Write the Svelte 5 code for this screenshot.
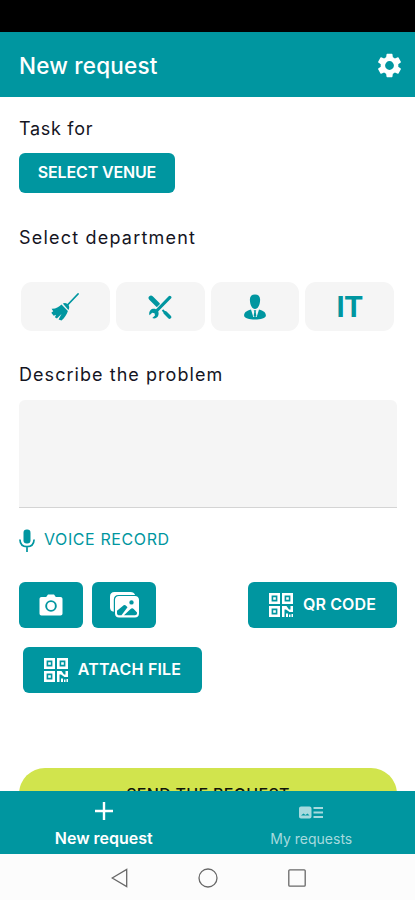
<script lang="ts">
  const departments = ['cleaning', 'maintenance', 'reception', 'it']

  let department = $state('')
  let problem = $state('')
</script>

{#snippet qrIcon()}
  <svg viewBox="0 0 24 24" width="24" height="24" aria-hidden="true">
    <path
      d="M1.3 1.300h8.400v8.400H1.300zM14.300 1.300h8.400v8.400h-8.400zM1.300 14.300h8.400v8.400H1.300z"
      fill="none"
      stroke="currentColor"
      stroke-width="2.600"
    />
    <path
      fill="currentColor"
      d="M4.2 4.200h2.600v2.600H4.200zM17.200 4.200h2.600v2.600h-2.600zM4.200 17.200h2.600v2.600H4.200zM13 13h4.500l2.500 3.500h1.500V13H24v6h-3.500L17 16.500h-1.500V24H13zM17 20.500h2v3.500h-2zM20 21.500h1.500V24H20zM22.500 21H24v3h-1.500z"
    />
  </svg>
{/snippet}

<div class="screen">
  <div class="status-bar"></div>

  <header class="app-bar">
    <h1>New request</h1>
    <button class="plain" aria-label="Settings">
      <svg viewBox="1.8 1.8 20.4 20.4" width="25" height="25">
        <path
          fill="currentColor"
          d="M19.14 12.94c.04-.3.06-.61.06-.94 0-.32-.02-.64-.07-.94l2.03-1.58a.49.49 0 0 0 .12-.61l-1.92-3.32a.49.49 0 0 0-.59-.22l-2.39.96a7.03 7.03 0 0 0-1.62-.94l-.36-2.54a.48.48 0 0 0-.48-.41h-3.84a.47.47 0 0 0-.47.41l-.36 2.54c-.59.24-1.13.57-1.62.94l-2.39-.96a.48.48 0 0 0-.59.22L2.74 8.87a.47.47 0 0 0 .12.61l2.03 1.58c-.05.3-.09.63-.09.94s.02.64.07.94l-2.03 1.58a.49.49 0 0 0-.12.61l1.92 3.32c.12.22.37.29.59.22l2.39-.96c.5.38 1.03.7 1.62.94l.36 2.54c.05.24.24.41.48.41h3.84c.24 0 .44-.17.47-.41l.36-2.54c.59-.24 1.13-.56 1.62-.94l2.39.96c.22.08.47 0 .59-.22l1.92-3.32a.47.47 0 0 0-.12-.61zM12 15.6a3.6 3.6 0 1 1 0-7.2 3.6 3.6 0 0 1 0 7.2z"
        />
      </svg>
    </button>
  </header>

  <main>
    <h2 class="task-label">Task for</h2>
    <button class="btn venue"><span>SELECT VENUE</span></button>

    <h2 class="department-label">Select department</h2>
    <div class="departments">
      {#each departments as name (name)}
        <button class="tile" aria-label={name} aria-pressed={department === name} onclick={() => (department = name)}>
          {#if name === 'cleaning'}
            <svg viewBox="0 0 28 28" width="28" height="28">
              <path d="M27 1 17 11.5" stroke="currentColor" stroke-width="1.8" stroke-linecap="round" />
              <path
                fill="currentColor"
                d="M11.8 10.6c2.2-1.2 4.9-.2 6 1.800.7 1.500.5 3.200-.4 4.600zM10.500 11.600l6.400 6.400c-1 3.300-3.400 6.900-6.400 9.600L7.600 26.400l2.900-5.400-4.600 4.500-2-1.300 1.200-2.500-2.400 1L.3 19.700l1.900-1.500-1.600-2.400c4.500.2 6.700-1.400 9.900-4.200z"
              />
            </svg>
          {:else if name === 'maintenance'}
            <svg viewBox="0 0 24 24" width="24" height="24">
              <path d="M3 3 9.5 9.5" stroke="currentColor" stroke-width="4.8" stroke-linecap="round" />
              <path d="M14.5 15 17 17.5" stroke="currentColor" stroke-width="2" />
              <path d="M17.3 17.8 21.5 22" stroke="currentColor" stroke-width="3.6" stroke-linecap="round" />
              <path d="M8 16.5 20.5 4" stroke="#f5f5f5" stroke-width="5" />
              <path d="M8 16.5 21.8 2.4" stroke="currentColor" stroke-width="3.2" stroke-linecap="round" />
              <path
                fill="currentColor"
                d="M2.4 15.2c1.8-1.9 5.4-1.8 7.2.2 1.7 2 1.2 5.7-.9 7.2-1.4 1-3.1 1.1-4.4.5L7 20.4l-.5-2.2-2.3-.4-2.7 2.500c-.6-1.700-.4-3.500.9-5.100z"
              />
            </svg>
          {:else if name === 'reception'}
            <svg viewBox="0 0 22 26" width="22" height="26">
              <path
                fill="currentColor"
                d="M11 .5c3.500 0 5.300 2.200 5.100 5.500-.1 4.700-2.100 9-5.100 9S6 10.700 5.900 6C5.700 2.700 7.500.5 11 .5z"
              />
              <path
                fill="currentColor"
                d="M7 15.600 9.300 23h3.400L15 15.600c4.500 1.200 6.900 3 6.900 6 0 2.600-5.400 4-10.900 4S.1 24.200.1 21.600c0-3 2.400-4.800 6.900-6z"
              />
              <path fill="currentColor" d="M9.700 16.200h2.600l-.6 1.600.6 4L11 23.500l-1.300-1.700.6-4z" />
            </svg>
          {:else}
            <span class="it">IT</span>
          {/if}
        </button>
      {/each}
    </div>

    <h2 class="problem-label">Describe the problem</h2>
    <textarea aria-label="Describe the problem" bind:value={problem}></textarea>

    <button class="plain voice">
      <svg viewBox="0 0 16 23" width="16" height="23" aria-hidden="true">
        <rect x="4.5" y="0.5" width="7" height="14" rx="3.2" fill="currentColor" />
        <path
          d="M.9 10.5c.2 4.500 3 7.200 7.100 7.200s6.900-2.700 7.100-7.200M8 17.700V23"
          fill="none"
          stroke="currentColor"
          stroke-width="1.7"
        />
      </svg>
      <span>VOICE RECORD</span>
    </button>

    <div class="attachments">
      <button class="btn square" aria-label="Camera">
        <svg viewBox="0 0 24 22" width="24" height="22">
          <path
            fill="currentColor"
            fill-rule="evenodd"
            d="M2.5 3h4.700L9 .5h6L16.800 3h4.700c1.200 0 2 .8 2 2v14.500c0 1.200-.8 2-2 2h-19c-1.200 0-2-.8-2-2V5c0-1.200.8-2 2-2zM12 6.200a5.800 5.800 0 1 0 0 11.600 5.800 5.800 0 0 0 0-11.600zm0 1.900a3.900 3.900 0 1 1 0 7.800 3.900 3.900 0 0 1 0-7.800z"
          />
        </svg>
      </button>
      <button class="btn square" aria-label="Gallery">
        <svg viewBox="0 0 29 26" width="29" height="26">
          <path
            fill="currentColor"
            d="M4.500 0h16c2.300 0 4 1.100 4.600 3H8.500C5.500 3 3.800 4.800 3.800 7.500v12.300C1.300 19.600 0 17.800 0 15.500v-11C0 1.700 1.700 0 4.500 0z"
          />
          <path
            fill="currentColor"
            fill-rule="evenodd"
            d="M9 4h16c2.400 0 4 1.500 4 3.800v13.700c0 2.400-1.600 4-4 4H9c-2.400 0-4-1.600-4-4V7.800C5 5.500 6.600 4 9 4zM7 18.700v2.600c0 1 .5 1.600 1.300 1.900h3.200l6-8-1.200-1.300c-1.200-1.100-2.400-1.100-3.500 0zM14 23.200h11c1.200 0 2-.8 2-2v-.8l-3.300-3.500c-1-.9-2.100-.9-3.100 0zM21.500 8.200a2.200 2.200 0 1 0 0 4.400 2.200 2.200 0 0 0 0-4.400z"
          />
        </svg>
      </button>
      <button class="btn qr">
        {@render qrIcon()}
        <span>QR CODE</span>
      </button>
      <button class="btn attach">
        {@render qrIcon()}
        <span>ATTACH FILE</span>
      </button>
    </div>

    <button class="send"><span>SEND THE REQUEST</span></button>
  </main>

  <nav class="tabs">
    <button class="tab active">
      <svg viewBox="0 0 18 18" width="18" height="18" aria-hidden="true">
        <path d="M9 0v18M0 9h18" stroke="currentColor" stroke-width="2.4" />
      </svg>
      <span>New request</span>
    </button>
    <button class="tab">
      <svg viewBox="0 0 24 13" width="24" height="13" aria-hidden="true">
        <path
          fill="currentColor"
          fill-rule="evenodd"
          d="M2 .5h8.500c1.100 0 2 .9 2 2v8c0 1.100-.9 2-2 2H2c-1.100 0-2-.9-2-2v-8c0-1.100.9-2 2-2zM2 9.500h8.500L8.500 7.500 6.500 9 4.500 7.500z"
        />
        <path d="M14.5 2H24M14.500 6.500H24M14.500 11H24" stroke="currentColor" stroke-width="2.2" />
      </svg>
      <span>My requests</span>
    </button>
  </nav>

  <div class="system-bar">
    <svg viewBox="0 0 17 20" width="17" height="20" aria-hidden="true">
      <path d="M15.7 1.500v17L1.200 10z" />
    </svg>
    <svg viewBox="0 0 20 20" width="20" height="20" aria-hidden="true">
      <circle cx="10" cy="10" r="9" />
    </svg>
    <svg viewBox="0 0 18 18" width="18" height="18" aria-hidden="true">
      <rect x="0.8" y="0.8" width="16.4" height="16.4" rx="1" />
    </svg>
  </div>
</div>

<style>
  :global(body) {
    margin: 0;
  }

  .screen {
    --teal: #0096a0;
    --tile: #f5f5f5;
    display: flex;
    flex-direction: column;
    width: 415px;
    height: 900px;
    overflow: hidden;
    background: #fff;
    color: #15151f;
    font-family: Inter, sans-serif;
  }

  button {
    display: flex;
    align-items: center;
    box-sizing: border-box;
    padding: 0;
    border: none;
    font: inherit;
    white-space: nowrap;
    cursor: pointer;
  }

  svg {
    display: block;
    flex: none;
  }

  .status-bar {
    flex: none;
    height: 32px;
    background: #000;
  }

  .app-bar {
    display: flex;
    flex: none;
    justify-content: space-between;
    align-items: center;
    box-sizing: border-box;
    height: 65px;
    padding: 1px 13px 0 19px;
    background: var(--teal);
    color: #fff;
  }

  h1 {
    margin: 0;
    font-size: 22.5px;
    font-weight: 500;
    letter-spacing: 0.2px;
  }

  h2 {
    margin: 0;
    font-size: 18px;
    font-weight: 400;
    line-height: 24px;
    white-space: nowrap;
  }

  .plain {
    background: none;
    color: inherit;
  }

  main {
    display: flex;
    flex: 1;
    flex-direction: column;
    min-height: 0;
    padding: 20px 18px 0 19px;
    overflow: hidden;
  }

  .btn {
    justify-content: center;
    border-radius: 6px;
    background: var(--teal);
    color: #fff;
    font-weight: 600;
  }

  .task-label {
    letter-spacing: 0.7px;
  }

  .venue {
    flex: none;
    width: 156px;
    height: 40px;
    margin-top: 12px;
    font-size: 16px;
    letter-spacing: -0.15px;
  }

  .department-label {
    margin-top: 33px;
    letter-spacing: 1.2px;
  }

  .departments {
    display: grid;
    flex: none;
    grid-template-columns: repeat(4, 1fr);
    gap: 6px;
    margin: 32px 3px 0 2px;
  }

  .tile {
    justify-content: center;
    height: 49px;
    border-radius: 11px;
    background: var(--tile);
    color: var(--teal);
  }

  .it {
    font-size: 29px;
    font-weight: 700;
    letter-spacing: -0.5px;
  }

  .problem-label {
    margin-top: 32px;
    letter-spacing: 1.05px;
  }

  textarea {
    display: block;
    flex: none;
    box-sizing: border-box;
    width: 100%;
    height: 108px;
    margin: 13px 0 0;
    padding: 12px;
    border: none;
    border-bottom: 1px solid #d4d4d4;
    border-radius: 6px 6px 0 0;
    background: var(--tile);
    font: inherit;
    resize: none;
  }

  .voice {
    flex: none;
    align-self: flex-start;
    gap: 9px;
    height: 24px;
    margin-top: 20px;
    color: var(--teal);
    font-size: 16px;
    letter-spacing: 0.6px;
  }

  .voice span {
    padding-bottom: 3px;
  }

  .attachments {
    display: flex;
    flex: none;
    flex-wrap: wrap;
    gap: 19px 9px;
    margin-top: 30px;
  }

  .attachments .btn {
    height: 46px;
    font-size: 16px;
  }

  .square {
    width: 64px;
  }

  .qr {
    gap: 10px;
    width: 149px;
    margin-left: auto;
    letter-spacing: 0.15px;
  }

  .attach {
    gap: 10px;
    width: 179px;
    margin-left: 4px;
    letter-spacing: 0.2px;
  }

  .btn span {
    padding-bottom: 3px;
  }

  .send {
    flex: none;
    justify-content: center;
    height: 52px;
    margin-top: 75px;
    border-radius: 26px;
    background: #d1e44d;
    color: #10150a;
    font-size: 16px;
    font-weight: 500;
    letter-spacing: 0.3px;
  }

  .tabs {
    display: grid;
    flex: none;
    grid-template-columns: 1fr 1fr;
    height: 63px;
    background: var(--teal);
  }

  .tab {
    flex-direction: column;
    justify-content: flex-start;
    gap: 10px;
    padding-top: 15px;
    background: none;
    color: #a6dade;
    font-size: 14px;
    line-height: 20px;
  }

  .tab.active {
    gap: 8px;
    padding-top: 11px;
    color: #fff;
    font-size: 16px;
    font-weight: 600;
  }

  .system-bar {
    display: flex;
    flex: none;
    justify-content: center;
    align-items: center;
    gap: 70px;
    box-sizing: border-box;
    height: 46px;
    padding: 2px 0 0 1px;
    background: #fcfcfc;
    fill: none;
    stroke: #686868;
    stroke-width: 1.3;
  }
</style>
